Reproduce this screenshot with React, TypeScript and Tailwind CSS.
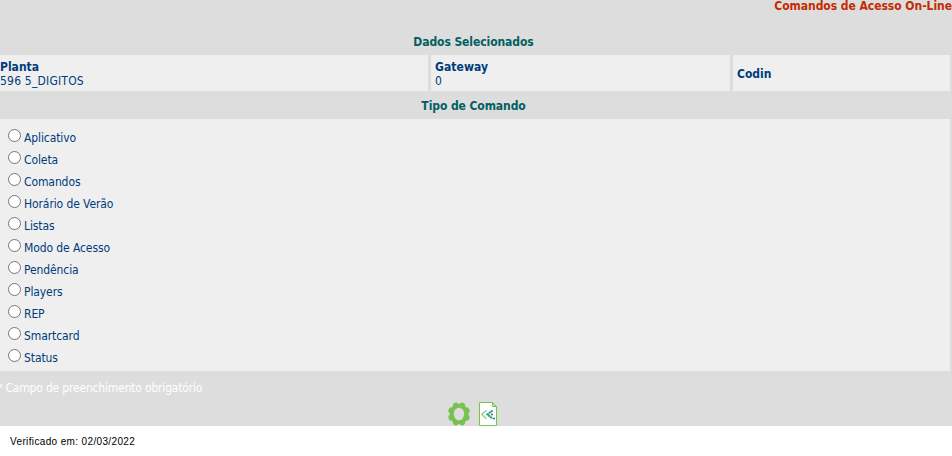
import React from "react";

const commands = [
  "Aplicativo",
  "Coleta",
  "Comandos",
  "Horário de Verão",
  "Listas",
  "Modo de Acesso",
  "Pendência",
  "Players",
  "REP",
  "Smartcard",
  "Status",
];

function SectionTitle({ children }: { children: React.ReactNode }) {
  return (
    <h2 className="flex h-7 w-[947px] items-center justify-center pt-[2px] text-[12px] font-bold tracking-[-0.08px] text-[#006060]">
      {children}
    </h2>
  );
}

function GearIcon() {
  return (
    <svg width="22" height="24" viewBox="0 0 22 24" className="block">
      <g fill="#79c250" transform="translate(11 12) scale(.93 1)">
        {[22.5, 67.5, 112.5, 157.5].map((angle) => (
          <rect key={angle} x="-3" y="-12" width="6" height="24" rx="2.6" transform={`rotate(${angle})`} />
        ))}
        <circle r="10.2" />
      </g>
      <ellipse cx="11" cy="12" rx="5.2" ry="6.3" fill="#ddd" />
    </svg>
  );
}

function FileIcon() {
  return (
    <svg width="18" height="24" viewBox="0 0 18 24" className="block">
      <path d="M.5.5h13l4 4v19H.5z" fill="#fff" stroke="#79c250" />
      <path d="M13.5.5v4h4z" fill="#c4e4b3" stroke="#79c250" />
      <path d="M7.5 8.5 2.5 12.5 7.5 16.5" fill="none" stroke="#8ccb6e" strokeWidth="1.6" strokeDasharray="1.8 .5" />
      <path d="M13.5 8.5 8.5 12.5 13.5 16.5" fill="none" stroke="#249579" strokeWidth="2" strokeDasharray="2 .5" />
      <path d="M12 12.5h2M14 16.5h2" stroke="#178075" strokeWidth="1.6" />
    </svg>
  );
}

export default function App() {
  return (
    <div className="h-[456px] w-[952px] overflow-hidden bg-white font-['DejaVu_Sans_Condensed','DejaVu_Sans',sans-serif] text-[12px] text-[#003c7b]">
      <main className="h-[426px] bg-[#ddd]">
        <h1 className="flex h-[27px] justify-end text-[12px] leading-[13px] font-bold tracking-[-0.04px] whitespace-nowrap text-[#c52b00]">
          Comandos de Acesso On-Line
        </h1>
        <SectionTitle>Dados Selecionados</SectionTitle>
        <section className="flex h-9 gap-[3px] leading-[14px]">
          <div className="w-[428px] bg-[#efefef] pt-[5px]">
            <b className="block">Planta</b>
            <span className="block tracking-[0.2px]">596 5_DIGITOS</span>
          </div>
          <div className="w-[299px] bg-[#efefef] pt-[5px] pl-1">
            <b className="block tracking-[0.1px]">Gateway</b>
            <span className="block">0</span>
          </div>
          <div className="flex w-[217px] items-center bg-[#efefef] pt-px pl-1">
            <b>Codin</b>
          </div>
        </section>
        <SectionTitle>Tipo de Comando</SectionTitle>
        <section className="h-[252px] w-[950px] bg-[#efefef] pt-[7px] pl-2">
          {commands.map((name) => (
            <label key={name} className="flex h-[22px] items-start gap-[3px]">
              <input
                type="radio"
                name="command"
                className="mt-[3px] h-[13px] w-[13px] shrink-0 appearance-none rounded-full border border-[#767676] bg-white"
              />
              <span className="pt-[4px] leading-[16px] tracking-[-0.1px]">{name}</span>
            </label>
          ))}
        </section>
        <p className="-ml-[3px] h-[31px] pt-[9px] leading-[16px] tracking-[-0.18px] text-white">
          * Campo de preenchimento obrigatório
        </p>
        <div className="flex gap-[9px] pl-[448px]">
          <GearIcon />
          <FileIcon />
        </div>
      </main>
      <footer className="pt-[9px] pl-[10px] font-['Liberation_Sans',Arial,sans-serif] text-[10px] leading-[13px] tracking-[0.36px] text-black">
        Verificado em: 02/03/2022
      </footer>
    </div>
  );
}
